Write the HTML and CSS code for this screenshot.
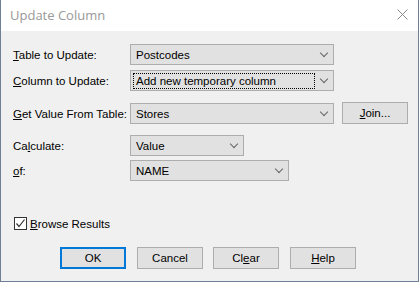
FILE: index.html
```html
<!DOCTYPE html>
<html lang="en">
<head>
  <meta charset="UTF-8">
  <title>Update Column</title>
  <link rel="stylesheet" href="styles.css">
</head>
<body>
  <div class="window">
    <div class="titlebar">
      <span class="title">Update Column</span>
      <svg class="close" width="11" height="11" viewBox="0 0 11 11">
        <path d="M0.5 0.5 L10.5 10.5 M10.5 0.5 L0.5 10.5" stroke="#8a8a8a" stroke-width="1" fill="none"/>
      </svg>
    </div>
    <div class="content">
      <!-- table to update -->
      <div class="row first">
        <label class="label"><u>T</u>able to Update:</label>
        <div class="combo wide"><span class="value">Postcodes</span><span class="chev"></span></div>
      </div>

      <!-- column to update -->
      <div class="row second">
        <label class="label"><u>C</u>olumn to Update:</label>
        <div class="combo wide"><span class="value focus">Add new temporary column</span><span class="chev"></span></div>
      </div>

      <!-- source table -->
      <div class="row third">
        <label class="label"><u>G</u>et Value From Table:</label>
        <div class="combo wide"><span class="value">Stores</span><span class="chev"></span></div>
        <button class="btn join"><u>J</u>oin...</button>
      </div>

      <!-- calculate -->
      <div class="row fourth">
        <label class="label">Ca<u>l</u>culate:</label>
        <div class="combo short"><span class="value">Value</span><span class="chev"></span></div>
      </div>

      <!-- of -->
      <div class="row fifth">
        <label class="label"><u>o</u>f:</label>
        <div class="combo mid"><span class="value">NAME</span><span class="chev"></span></div>
      </div>

      <label class="check">
        <span class="box">
          <svg width="11" height="11" viewBox="0 0 11 11">
            <path d="M1.5 5.5 L4 8.5 L9.5 1.5" stroke="#333" stroke-width="1.2" fill="none"/>
          </svg>
        </span>
        <span><u>B</u>rowse Results</span>
      </label>

      <div class="buttons">
        <button class="btn default">OK</button>
        <button class="btn">Cancel</button>
        <button class="btn clear">Cl<u>e</u>ar</button>
        <button class="btn help"><u>H</u>elp</button>
      </div>
    </div>
  </div>
</body>
</html>
```

FILE: styles.css
```css
* {
  box-sizing: border-box;
}
body {
  margin: 0;
  font-family: "Liberation Sans", sans-serif;
  font-size: 11.5px;
  color: #000;
}
.window {
  width: 419px;
  height: 282px;
  border: 1px solid #6f7f94;
  border-top: none;
  background: #f0f0f0;
}
.titlebar {
  height: 31px;
  background: #fff;
  display: flex;
  align-items: center;
  justify-content: space-between;
  padding: 0 10px 0 9px;
}
.title {
  font-family: "Open Sans", "Liberation Sans", sans-serif;
  font-size: 13px;
  color: #999;
  margin-top: -2px;
}
.close {
  margin-top: -2px;
}
.content {
  padding: 13px 0 0 12px;
}
.row {
  display: flex;
  align-items: center;
}
.second { margin-top: 5px; }
.third { margin-top: 12px; }
.fourth { margin-top: 11px; }
.fifth { margin-top: 4px; }
.label {
  width: 117px;
}
.combo {
  height: 21px;
  background: #e1e1e1;
  border: 1px solid #adadad;
  display: flex;
  align-items: center;
  justify-content: space-between;
  padding: 0 6px 0 2px;
}
.wide { width: 204px; }
.mid { width: 159px; }
.short { width: 114px; }
.value {
  padding: 1px 2px;
  border: 1px solid transparent;
}
.focus {
  border: 1px dotted #000;
  width: 182px;
}
.chev {
  width: 6px;
  height: 6px;
  border-right: 1px solid #666;
  border-bottom: 1px solid #666;
  transform: rotate(45deg);
  margin-top: -4px;
}
.btn {
  width: 66px;
  height: 22px;
  background: #e1e1e1;
  border: 1px solid #adadad;
  font-family: "Liberation Sans", sans-serif;
  font-size: 11.5px;
  color: #000;
  padding: 0;
}
.join {
  margin-left: 8px;
  margin-top: -1px;
}
.default {
  border: 2px solid #0078d7;
}
.check {
  display: flex;
  align-items: center;
  margin-top: 36px;
  margin-left: 1px;
}
.box {
  width: 13px;
  height: 13px;
  border: 1px solid #333;
  background: #fff;
  display: flex;
  align-items: center;
  justify-content: center;
  margin-right: 3px;
}
.buttons {
  display: flex;
  gap: 11px;
  margin-top: 17px;
  margin-left: 47px;
}
.buttons .clear {
  margin-left: -1px;
}
```
